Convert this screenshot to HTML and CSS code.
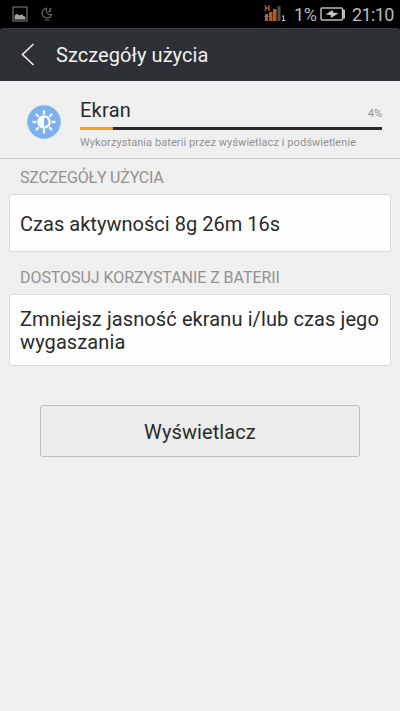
FILE: index.html
```html
<!DOCTYPE html>
<html lang="pl">
<head>
<meta charset="utf-8">
<title>Szczegóły użycia</title>
<link rel="stylesheet" href="styles.css">
</head>
<body>
<div class="status">
  <svg class="status-picture" width="16" height="16" viewBox="0 0 16 16"><rect x="1" y="1" width="14" height="14" fill="none" stroke="#6c6e70" stroke-width="1.2"/><path d="M2.500 13.500V10q1-2 2.500-2 1.500 0 2.500 1.500Q9 8 10.500 8.500l1 1.500q2 0 2 1.500v2z" fill="#a0a2a4"/></svg>
  <svg class="status-moon" width="12" height="14" viewBox="0 0 12 14" fill="none" stroke="#66686a" stroke-width="1.100"><path d="M5.500 1.200A4.800 4.800 0 1 0 10.500 7.500 4.500 4.500 0 0 1 5.500 1.200zM8 2h2L8 4.500h2M3.500 13h5"/></svg>
  <svg class="status-signal" width="22" height="18" viewBox="0 0 22 18"><path d="M1.500 1v6M5 1v6M1.500 4H5" stroke="#b65c1b" stroke-width="1.300" fill="none"/><path d="M1 10h3v7H1zM5 8h3.500v9H5zM9 5h3.500v12H9z" fill="#b65c1b"/><path d="M13.500 2h3v15h-3z" fill="#4b4e52"/><path d="M0 13l2.500-3L5 13z" fill="#777"/><path d="M18 12.500l1.500-1V16.500M18 16.500h3.500" stroke="#c0c0c0" fill="none"/></svg>
  <span class="percent">1%</span>
  <svg class="status-battery" width="26" height="14" viewBox="0 0 26 14"><rect x="1" y="1" width="21.500" height="12" rx="1" fill="none" stroke="#b9bbbc" stroke-width="1.500"/><path d="M23 2.500h2v9h-2z" fill="#b9bbbc"/><path d="M5.500 7.500l7-4.500.5 2.500 5.500.7-7.500 4.800-.5-3z" fill="#c4c6c7"/></svg>
  <span class="clock">21:10</span>
</div>
<header class="header">
  <svg class="back" width="14" height="24" viewBox="0 0 14 24"><path d="M12.500 1L1.500 11.500l11 10.500" fill="none" stroke="#e8e8e6" stroke-width="1.700"/></svg>
  <h1 class="title">Szczegóły użycia</h1>
</header>
<section class="summary">
  <svg class="brightness" width="34" height="34" viewBox="0 0 34 34"><circle cx="17" cy="17" r="16.700" fill="#7bb1f0"/><g stroke="#fff" stroke-width="2.300" stroke-linecap="round"><path d="M17 6.500v2M17 25.500v2M6.500 17h2M25.500 17h2M9.600 9.600l1.400 1.400M23 23l1.400 1.400M9.600 24.400L11 23M23 11l1.400-1.400"/></g><circle cx="17" cy="17" r="6.700" fill="#fff"/><path d="M17 12.500a4.500 4.500 0 0 1 0 9z" fill="#7bb1f0"/></svg>
  <div class="usage">
    <div class="usage-top"><span class="name">Ekran</span><span class="share">4%</span></div>
    <div class="bar"><div class="bar-fill"></div></div>
    <p class="note">Wykorzystania baterii przez wyświetlacz i podświetlenie</p>
  </div>
</section>
<main>
  <h2 class="heading details">SZCZEGÓŁY UŻYCIA</h2>
  <div class="card active-time"><span>Czas aktywności 8g 26m 16s</span></div>
  <h2 class="heading adjust">DOSTOSUJ KORZYSTANIE Z BATERII</h2>
  <div class="card advice"><span>Zmniejsz jasność ekranu i/lub czas jego wygaszania</span></div>
  <button class="button">Wyświetlacz</button>
</main>
</body>
</html>
```

FILE: styles.css
```css
* { box-sizing: border-box; }
body { margin: 0; min-height: 711px; background: #efefef; color: #292a2c; font-family: Roboto, sans-serif; }
h1, h2, p { margin: 0; font-weight: 400; }
svg { display: block; flex: none; }
.status { height: 31px; margin-bottom: -3px; padding: 0 6px 3px 12px; display: flex; align-items: center; background: #000; color: #b9bbbc; font-size: 18px; white-space: nowrap; }
.status-moon { margin-left: 13px; }
.status-signal { margin: -2px 0 0 auto; }
.percent { width: 23px; margin-left: 8px; letter-spacing: -.3px; }
.status-battery { margin-left: 3px; }
.clock { width: 42px; margin-left: 6px; letter-spacing: -.6px; }
.header { height: 53px; display: flex; align-items: center; padding: 0 0 0 21px; background: #2d3035; border-top: 1px solid #3b3d40; border-radius: 3px 3px 0 0; color: #f1f1ef; position: relative; }
.title { margin-left: 21px; font-size: 20px; line-height: 24px; letter-spacing: .06px; }
.summary { height: 78px; display: flex; padding: 0 18px 0 27px; border-bottom: 1px solid #d0d0d0; }
.brightness { margin-top: 24px; }
.usage { flex: 1; margin-left: 19px; padding-top: 17px; }
.usage-top { height: 29px; display: flex; justify-content: space-between; }
.name { font-size: 20px; line-height: 25px; letter-spacing: .25px; }
.share { margin-top: 8px; font-size: 11px; line-height: 16px; color: #929292; }
.bar { height: 3px; background: #2b2b2d; }
.bar-fill { width: 11%; height: 3px; background: #fc9e27; }
.note { margin-top: 5px; font-size: 11px; line-height: 15px; letter-spacing: .075px; color: #929292; white-space: nowrap; }
.heading { padding-left: 20px; font-size: 16px; line-height: 20px; color: #929292; white-space: nowrap; }
.details { margin-top: 9px; letter-spacing: -.2px; }
.adjust { margin-top: 16px; letter-spacing: -.06px; }
.card { margin: 6px 9px 0; padding: 0 10px; display: flex; align-items: center; background: #fefefe; border: 1px solid #dcdcdc; border-radius: 2px; font-size: 20px; line-height: 23px; }
.active-time { height: 58px; padding-top: 2px; letter-spacing: .03px; }
.advice { height: 72px; padding-top: 1px; letter-spacing: .1px; }
.button { display: block; width: 320px; height: 52px; margin: 39px auto 0; padding: 2px 0 0; background: #ececec; border: 1px solid #bcbcbc; border-radius: 3px; font: 20px/24px Roboto, sans-serif; letter-spacing: .1px; color: #292a2c; }
```
